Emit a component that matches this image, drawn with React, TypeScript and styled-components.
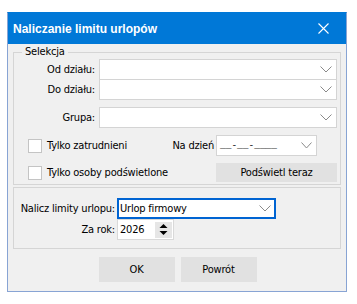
import React from "react";
import styled, { createGlobalStyle } from "styled-components";

const GlobalStyle = createGlobalStyle`
  html, body { margin: 0; padding: 0; background: #ffffff; }
  body { font-family: "DejaVu Sans Condensed", "Liberation Sans", Arial, sans-serif; font-size: 11px; letter-spacing: -0.2px; color: #000; }
  * { box-sizing: border-box; }
`;

const Window = styled.div`
  margin: 12px 0 0 7px;
  width: 340px;
  height: 280px;
  border: 1px solid #88a4d4;
  border-top-color: #0078d7;
  background: #f0f0f0;
  display: flex;
  flex-direction: column;
`;

const TitleBar = styled.div`
  height: 31px;
  background: #0078d7;
  display: flex;
  align-items: center;
  padding-left: 5px;
`;

const Title = styled.div`
  flex: 1;
  color: #fff;
  font-family: "Liberation Sans", Arial, sans-serif;
  font-weight: bold;
  font-size: 12px;
  letter-spacing: 0;
  margin-top: 1px;
`;

const CloseButton = styled.div`
  width: 46px;
  height: 31px;
  display: flex;
  align-items: center;
  justify-content: center;
`;

const Body = styled.div`
  flex: 1;
  padding: 8px 5px 0 5px;
  display: flex;
  flex-direction: column;
`;

const GroupBox = styled.div<{ $h: number; $pt: number }>`
  position: relative;
  height: ${(p) => p.$h}px;
  border: 1px solid #d5d5d5;
  padding: ${(p) => p.$pt}px 3px 0 0;
  display: flex;
  flex-direction: column;
`;

const Legend = styled.div`
  position: absolute;
  top: -8px;
  left: 8px;
  padding: 0 3px;
  background: #f0f0f0;
  line-height: 14px;
`;

const FieldRow = styled.div<{ $mt?: number; $labelW: number; $gap: number }>`
  display: flex;
  align-items: center;
  margin-top: ${(p) => p.$mt ?? 0}px;
  & > label {
    width: ${(p) => p.$labelW}px;
    margin-right: ${(p) => p.$gap}px;
    text-align: right;
    white-space: nowrap;
  }
`;

const Combo = styled.div<{ $w?: number; $focus?: boolean }>`
  height: 21px;
  ${(p) => (p.$w ? `width: ${p.$w}px;` : "flex: 1;")}
  background: #fff;
  border: ${(p) => (p.$focus ? "2px solid #0064d2" : "1px solid #d4d4d4")};
  display: flex;
  align-items: center;
  padding-left: ${(p) => (p.$focus ? 1 : 3)}px;
  padding-right: ${(p) => (p.$focus ? 3 : 4)}px;
`;

const ComboText = styled.span`
  flex: 1;
  white-space: nowrap;
`;

const DateMask = styled.span`
  flex: 1;
  white-space: nowrap;
  font-family: "Liberation Mono", monospace;
  font-size: 9.5px;
  letter-spacing: 0;
`;

const CheckRow = styled.div<{ $mt: number }>`
  display: flex;
  align-items: center;
  margin-top: ${(p) => p.$mt}px;
  padding-left: 14px;
  height: 21px;
`;

const CheckBox = styled.span`
  width: 14px;
  height: 14px;
  border: 1px solid #c4c4c4;
  background: #fff;
  margin-right: 5px;
  flex: none;
`;

const Spacer = styled.div`
  flex: 1;
`;

const InlineLabel = styled.span`
  margin-right: 2px;
`;

const Button = styled.div<{ $w: number; $h: number }>`
  width: ${(p) => p.$w}px;
  height: ${(p) => p.$h}px;
  background: #e1e1e1;
  border: 1px solid #e1e1e1;
  display: flex;
  align-items: center;
  justify-content: center;
`;

const Spinner = styled.div`
  width: 57px;
  height: 21px;
  background: #fff;
  border: 1px solid #d9d9d9;
  display: flex;
  align-items: center;
  padding: 0 1px 0 2px;
`;

const SpinButtons = styled.div`
  width: 17px;
  height: 16px;
  background: #e6e6e6;
  display: flex;
  align-items: center;
  justify-content: center;
`;

const ButtonRow = styled.div`
  display: flex;
  justify-content: center;
  gap: 6px;
  margin-top: 8px;
  margin-left: 1px;
`;

const Chevron = ({ w = 12 }: { w?: number }) => (
  <svg width={w} height={7} viewBox={`0 0 ${w} 7`}>
    <polyline points={`0.5,0.5 ${w / 2},6 ${w - 0.5},0.5`} fill="none" stroke="#8a8a8a" strokeWidth="1" />
  </svg>
);

const CloseIcon = () => (
  <svg width="11" height="11" viewBox="0 0 11 11">
    <path d="M0.5 0.5 L10.5 10.5 M10.5 0.5 L0.5 10.5" stroke="#fff" strokeWidth="1.1" />
  </svg>
);

const SpinIcon = () => (
  <svg width="9" height="13" viewBox="0 0 9 13">
    <polygon points="4.5,1 8.5,5 0.5,5" fill="#000" />
    <polygon points="0.5,8 8.5,8 4.5,12" fill="#000" />
  </svg>
);

export default function App() {
  return (
    <>
      <GlobalStyle />
      <Window>
        <TitleBar>
          <Title>Naliczanie limitu urlopów</Title>
          <CloseButton>
            <CloseIcon />
          </CloseButton>
        </TitleBar>
        <Body>
          <GroupBox $h={133} $pt={6}>
            <Legend>Selekcja</Legend>
            <FieldRow $labelW={81} $gap={4}>
              <label>Od działu:</label>
              <Combo>
                <ComboText></ComboText>
                <Chevron />
              </Combo>
            </FieldRow>
            <FieldRow $mt={-1} $labelW={81} $gap={4}>
              <label>Do działu:</label>
              <Combo>
                <ComboText></ComboText>
                <Chevron />
              </Combo>
            </FieldRow>
            <FieldRow $mt={7} $labelW={81} $gap={4}>
              <label>Grupa:</label>
              <Combo>
                <ComboText></ComboText>
                <Chevron />
              </Combo>
            </FieldRow>
            <CheckRow $mt={7}>
              <CheckBox />
              <span>Tylko zatrudnieni</span>
              <Spacer />
              <InlineLabel>Na dzień</InlineLabel>
              <Combo $w={101} style={{ marginRight: 20 }}>
                <DateMask>__-__-____</DateMask>
                <Chevron w={11} />
              </Combo>
            </CheckRow>
            <CheckRow $mt={6}>
              <CheckBox />
              <span>Tylko osoby podświetlone</span>
              <Spacer />
              <Button $w={121} $h={19}>Podświetl teraz</Button>
            </CheckRow>
          </GroupBox>
          <div style={{ height: 2 }} />
          <GroupBox $h={62} $pt={10}>
            <FieldRow $labelW={101} $gap={2}>
              <label>Nalicz limity urlopu:</label>
              <Combo $w={159} $focus>
                <ComboText>Urlop firmowy</ComboText>
                <Chevron />
              </Combo>
            </FieldRow>
            <FieldRow $labelW={101} $gap={2}>
              <label>Za rok:</label>
              <Spinner>
                <ComboText>2026</ComboText>
                <SpinButtons>
                  <SpinIcon />
                </SpinButtons>
              </Spinner>
            </FieldRow>
          </GroupBox>
          <ButtonRow>
            <Button $w={76} $h={25}>OK</Button>
            <Button $w={76} $h={25}>Powrót</Button>
          </ButtonRow>
        </Body>
      </Window>
    </>
  );
}
